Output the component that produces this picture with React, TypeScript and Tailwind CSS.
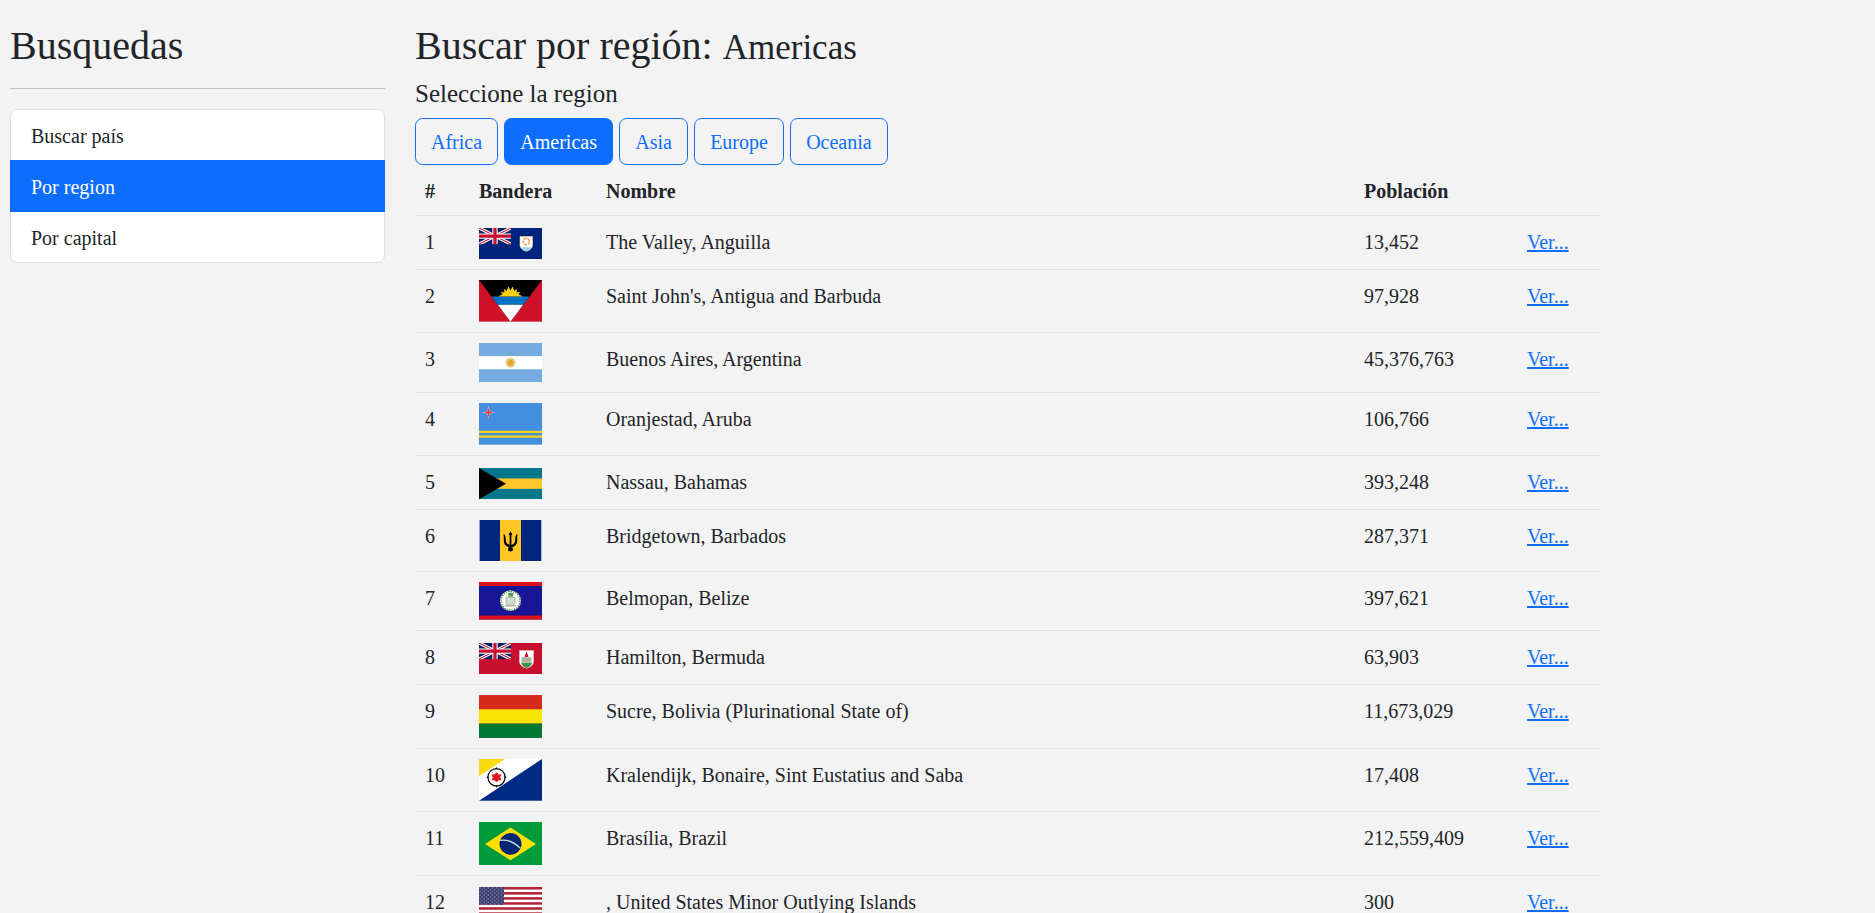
import React from 'react';

const UnionJack: React.FC<{ w: number; h: number }> = ({ w, h }) => (
    <svg x="0" y="0" width={w} height={h} viewBox="0 0 60 30" preserveAspectRatio="none">
        <rect width="60" height="30" fill="#012169" />
        <path d="M0 0L60 30M60 0L0 30" stroke="#fff" strokeWidth="6" />
        <path d="M0 0L60 30M60 0L0 30" stroke="#c8102e" strokeWidth="2" />
        <path d="M30 0V30M0 15H60" stroke="#fff" strokeWidth="10" />
        <path d="M30 0V30M0 15H60" stroke="#c8102e" strokeWidth="6" />
    </svg>
);

const Anguilla = () => (
    <svg viewBox="0 0 63 31" width="63" height="31.25" preserveAspectRatio="none" className="inline align-middle">
        <rect width="63" height="31" fill="#00247d" />
        <UnionJack w={32} h={16} />
        <path d="M41 8.5H53.5V17C53.5 20 50 22.5 47.2 23C44.5 22.5 41 20 41 17Z" fill="#fff" stroke="#e8dcb0" strokeWidth="0.6" />
        <path d="M42.5 19H52C51 21 49 22.3 47.2 23C45.5 22.3 43.5 21 42.5 19Z" fill="#9fd0ee" />
        <circle cx="47.2" cy="13.5" r="3.2" fill="none" stroke="#f18a21" strokeWidth="1.3" strokeDasharray="3 1" />
    </svg>
);

const Antigua = () => (
    <svg viewBox="0 0 63 42" width="63" height="41.67" preserveAspectRatio="none" className="inline align-middle">
        <rect width="63" height="42" fill="#ce1126" />
        <path d="M0 0H63L31.5 42Z" fill="#000" />
        <path d="M12.5 16.7H50.5L44.2 25H18.8Z" fill="#0072c6" />
        <path d="M18.8 25H44.2L31.5 42Z" fill="#fff" />
        <path d="M19 16.7L23.6 14.4L21.5 11.8L25.3 12.6L25.4 8.8L27.8 11.2L29.4 6.5L31.5 10.6L33.6 6.5L35.2 11.2L37.6 8.8L37.7 12.6L41.5 11.8L39.4 14.4L44 16.7Z" fill="#fcd116" />
    </svg>
);

const Argentina = () => (
    <svg viewBox="0 0 63 39" width="63" height="39.4" preserveAspectRatio="none" className="inline align-middle">
        <rect width="63" height="39" fill="#74acdf" />
        <rect y="13" width="63" height="13" fill="#fff" />
        <circle cx="31.5" cy="19.5" r="5" fill="#e8c98a" />
        <circle cx="31.5" cy="19.5" r="2.8" fill="#e2a521" />
    </svg>
);

const Aruba = () => (
    <svg viewBox="0 0 63 42" width="63" height="41.67" preserveAspectRatio="none" className="inline align-middle">
        <rect width="63" height="42" fill="#418fde" />
        <rect y="28" width="63" height="2.3" fill="#fbd116" />
        <rect y="32.7" width="63" height="2.3" fill="#fbd116" />
        <path d="M9.5 2.5L10.8 8.2L16 9.5L10.8 10.8L9.5 16.5L8.2 10.8L3 9.5L8.2 8.2Z" fill="#f9a9b0" />
        <path d="M9.5 4.5L10.4 8.6L14 9.5L10.4 10.4L9.5 14.5L8.6 10.4L5 9.5L8.6 8.6Z" fill="#ef3340" />
    </svg>
);

const Bahamas = () => (
    <svg viewBox="0 0 63 32" width="63" height="31.25" preserveAspectRatio="none" className="inline align-middle">
        <rect width="63" height="32" fill="#00778b" />
        <rect y="10.67" width="63" height="10.67" fill="#ffc72c" />
        <path d="M0 0L27 16L0 32Z" fill="#000" />
    </svg>
);

const Barbados = () => (
    <svg viewBox="0 0 63 41" width="63" height="41.67" preserveAspectRatio="none" className="inline align-middle">
        <rect width="63" height="41" fill="#00267f" />
        <rect x="21" width="21" height="41" fill="#ffc726" />
        <path d="M0 0H0.8V41H0ZM62 0H63V41H62Z" fill="#b5bfdc" />
        <path d="M31.5 11L33.4 14.6L32.4 15V27H33.8V30.5H32.4V31H30.6V30.5H29.2V27H30.6V15L29.6 14.6Z" fill="#000" />
        <path d="M24.5 13.5C26.5 14.5 26.8 17 26.8 20C26.8 22.5 28.5 24.5 31.5 24.5C34.5 24.5 36.2 22.5 36.2 20C36.2 17 36.5 14.5 38.5 13.5C38.2 16 38.2 18 38.2 20.5C38.2 24.5 35.5 26.8 31.5 26.8C27.5 26.8 24.8 24.5 24.8 20.5C24.8 18 24.8 16 24.5 13.5Z" fill="#000" />
    </svg>
);

const Belize = () => (
    <svg viewBox="0 0 63 38" width="63" height="37.5" preserveAspectRatio="none" className="inline align-middle">
        <rect width="63" height="38" fill="#171696" />
        <rect width="63" height="4" fill="#e0101a" />
        <rect y="34" width="63" height="4" fill="#e0101a" />
        <circle cx="31.5" cy="19" r="10.5" fill="#fff" />
        <circle cx="31.5" cy="19" r="9.6" fill="none" stroke="#4b9a4a" strokeWidth="1.6" strokeDasharray="1.5 1" />
        <path d="M27 15.5H36V21C36 22.5 34 23.5 31.5 23.5C29 23.5 27 22.5 27 21Z" fill="#cfe0d0" stroke="#8a8f6a" strokeWidth="0.6" />
        <path d="M29 11.5C31 10.5 33 10.5 34.5 11.5L34 15H29.5Z" fill="#5f9a58" />
        <rect x="26" y="23.5" width="11" height="1.4" fill="#b8b090" />
    </svg>
);

const Bermuda = () => (
    <svg viewBox="0 0 63 31" width="63" height="31.25" preserveAspectRatio="none" className="inline align-middle">
        <rect width="63" height="31" fill="#c8102e" />
        <UnionJack w={32} h={16} />
        <path d="M40.5 7.5H54.5V18.5C54.5 22 50.5 24.5 47.5 25C44.5 24.5 40.5 22 40.5 18.5Z" fill="#fff" stroke="#f0c8c8" strokeWidth="0.5" />
        <path d="M42 19.5H53C52.5 22.5 49.5 24.3 47.5 24.7C45.5 24.3 42.5 22.5 42 19.5Z" fill="#3f8f3c" />
        <path d="M45.5 13.5L47.5 8.5L49.5 13.5L47.5 14.5Z" fill="#c8102e" />
        <path d="M42.5 14H52.5V19.5H42.5Z" fill="#8fc6c8" />
        <rect x="44" y="15" width="7" height="3.5" fill="#c9a98a" />
    </svg>
);

const Bolivia = () => (
    <svg viewBox="0 0 63 43" width="63" height="42.9" preserveAspectRatio="none" className="inline align-middle">
        <rect width="63" height="43" fill="#d52b1e" />
        <rect y="14.33" width="63" height="14.33" fill="#f9e300" />
        <rect y="28.67" width="63" height="14.33" fill="#007934" />
    </svg>
);

const Bonaire = () => (
    <svg viewBox="0 0 63 41" width="63" height="41.67" preserveAspectRatio="none" className="inline align-middle">
        <rect width="63" height="41" fill="#fff" />
        <path d="M0 0H26L0 17Z" fill="#f9d90f" />
        <path d="M63 0V41H0Z" fill="#012a87" />
        <circle cx="17.5" cy="18" r="8.6" fill="none" stroke="#000" strokeWidth="1.2" />
        <path d="M17.5 7.6L18.5 10H16.5ZM17.5 28.4L16.5 26H18.5ZM7.1 18L9.5 17V19ZM27.9 18L25.5 19V17Z" fill="#000" />
        <path d="M17.5 13L19.6 15.2L22.4 15.2L21.2 18L22.4 20.8L19.6 20.8L17.5 23L15.4 20.8L12.6 20.8L13.8 18L12.6 15.2L15.4 15.2Z" fill="#dc171d" />
    </svg>
);

const Brazil = () => (
    <svg viewBox="0 0 63 44" width="63" height="43.75" preserveAspectRatio="none" className="inline align-middle">
        <rect width="63" height="44" fill="#009c3b" />
        <path d="M31.5 5.5L57 22L31.5 38.5L6 22Z" fill="#ffdf00" />
        <circle cx="31.5" cy="22" r="11" fill="#002776" />
        <path d="M21 18.5C27 17.5 35 20 41.5 26.5" fill="none" stroke="#cfe3d6" strokeWidth="1.3" />
    </svg>
);

const UsFlag = () => (
    <svg viewBox="0 0 63 33" width="63" height="32.9" preserveAspectRatio="none" className="inline align-middle">
        <defs>
            <pattern id="stars" width="4.2" height="3.6" patternUnits="userSpaceOnUse">
                <circle cx="1" cy="0.9" r="0.55" fill="#e8e8f0" />
                <circle cx="3.1" cy="2.7" r="0.55" fill="#e8e8f0" />
            </pattern>
        </defs>
        <rect width="63" height="33" fill="#fff" />
        {[0, 2, 4, 6, 8, 10, 12].map((i) => (
            <rect key={i} y={(i * 33) / 13} width="63" height={33 / 13} fill="#b22234" />
        ))}
        <rect width="25" height="17.8" fill="#3c3b6e" />
        <rect width="25" height="17.8" fill="url(#stars)" />
    </svg>
);

const rows: { name: string; pop: string; flag: React.ReactNode }[] = [
    { name: 'The Valley, Anguilla', pop: '13,452', flag: <Anguilla /> },
    { name: "Saint John's, Antigua and Barbuda", pop: '97,928', flag: <Antigua /> },
    { name: 'Buenos Aires, Argentina', pop: '45,376,763', flag: <Argentina /> },
    { name: 'Oranjestad, Aruba', pop: '106,766', flag: <Aruba /> },
    { name: 'Nassau, Bahamas', pop: '393,248', flag: <Bahamas /> },
    { name: 'Bridgetown, Barbados', pop: '287,371', flag: <Barbados /> },
    { name: 'Belmopan, Belize', pop: '397,621', flag: <Belize /> },
    { name: 'Hamilton, Bermuda', pop: '63,903', flag: <Bermuda /> },
    { name: 'Sucre, Bolivia (Plurinational State of)', pop: '11,673,029', flag: <Bolivia /> },
    { name: 'Kralendijk, Bonaire, Sint Eustatius and Saba', pop: '17,408', flag: <Bonaire /> },
    { name: 'Brasília, Brazil', pop: '212,559,409', flag: <Brazil /> },
    { name: ', United States Minor Outlying Islands', pop: '300', flag: <UsFlag /> },
];

const regions = ['Africa', 'Americas', 'Asia', 'Europe', 'Oceania'];

const App: React.FC = () => {
    return (
        <div className="flex h-screen overflow-hidden bg-[#f3f3f3] text-[20px] leading-[30px] text-[#212529] font-['Liberation_Serif','Times_New_Roman',serif]">
            <aside className="ml-[10px] w-[375px] shrink-0 pt-[22px]">
                <h2 className="text-[40px] leading-[48px] font-normal">Busquedas</h2>
                <hr className="mt-[18px] mb-[20px] border-t border-[#c0c0c1]" />
                <div className="rounded-[7.5px] border border-[#dfdfdf] bg-white">
                    <div className="h-[50px] px-[20px] pt-[11px]">Buscar país</div>
                    <div className="-mx-px h-[52px] bg-[#0d6efd] px-[21px] pt-[12px] text-white">Por region</div>
                    <div className="h-[50px] px-[20px] pt-[11px]">Por capital</div>
                </div>
            </aside>

            <main className="ml-[30px] w-[1185px] shrink-0 pt-[22px]">
                <h2 className="mb-[9px] text-[40px] leading-[48px] font-normal">
                    Buscar por región: <small className="text-[35px] leading-none">Americas</small>
                </h2>
                <h5 className="mb-[9px] text-[25px] leading-[30px] font-normal">Seleccione la region</h5>
                <div className="flex gap-[6.25px]">
                    {regions.map((r) => (
                        <button
                            key={r}
                            className={
                                r === 'Americas'
                                    ? 'rounded-[7.5px] border border-[#0d6efd] bg-[#0d6efd] px-[15px] py-[7.5px] text-white'
                                    : 'rounded-[7.5px] border border-[#0d6efd] px-[15px] py-[7.5px] text-[#0d6efd]'
                            }
                        >
                            {r}
                        </button>
                    ))}
                </div>
                <table className="w-full table-fixed">
                    <colgroup>
                        <col className="w-[54px]" />
                        <col className="w-[127px]" />
                        <col className="w-[758px]" />
                        <col className="w-[163px]" />
                        <col className="w-[83px]" />
                    </colgroup>
                    <thead>
                        <tr className="border-b border-[#dee2e6]">
                            <th className="px-[10px] pt-[11px] pb-[9px] text-left font-bold">#</th>
                            <th className="px-[10px] pt-[11px] pb-[9px] text-left font-bold">Bandera</th>
                            <th className="px-[10px] pt-[11px] pb-[9px] text-left font-bold">Nombre</th>
                            <th className="px-[10px] pt-[11px] pb-[9px] text-left font-bold">Población</th>
                            <th className="px-[10px] pt-[11px] pb-[9px]"></th>
                        </tr>
                    </thead>
                    <tbody>
                        {rows.map((row, i) => (
                            <tr key={row.name} className="border-b border-[#dee2e6]">
                                <td className="px-[10px] pt-[11px] pb-[9px] align-top">{i + 1}</td>
                                <td className="p-[10px] align-top">{row.flag}</td>
                                <td className="px-[10px] pt-[11px] pb-[9px] align-top">{row.name}</td>
                                <td className="px-[10px] pt-[11px] pb-[9px] align-top">{row.pop}</td>
                                <td className="px-[10px] pt-[11px] pb-[9px] align-top">
                                    <a href="#" className="text-[#0d6efd] underline">Ver...</a>
                                </td>
                            </tr>
                        ))}
                    </tbody>
                </table>
            </main>
        </div>
    );
};

export default App;
